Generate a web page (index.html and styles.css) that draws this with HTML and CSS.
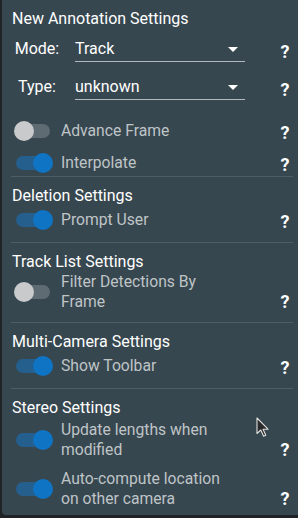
FILE: index.html
```html
<!DOCTYPE html>
<html>
<head>
<meta charset="utf-8">
<link rel="stylesheet" href="styles.css">
</head>
<body>
<div class="panel">
  <div class="section">
    <div class="title">New Annotation Settings</div>
    <div class="select-row">
      <span class="sel-label">Mode:</span>
      <div class="select">
        <span class="sel-value">Track</span>
        <svg class="sel-arrow" viewBox="0 0 24 24" width="24" height="24"><path d="M7,10L12,15L17,10H7Z" fill="#fff"/></svg>
      </div>
      <span class="help sel-help">?</span>
    </div>
    <div class="select-row">
      <span class="sel-label">Type:</span>
      <div class="select">
        <span class="sel-value">unknown</span>
        <svg class="sel-arrow" viewBox="0 0 24 24" width="24" height="24"><path d="M7,10L12,15L17,10H7Z" fill="#fff"/></svg>
      </div>
      <span class="help sel-help">?</span>
    </div>
    <div class="toggles">
      <div class="toggle-row">
        <span class="switch off"><span class="track"></span><span class="thumb"></span></span>
        <span class="label">Advance Frame</span>
        <span class="help">?</span>
      </div>
      <div class="toggle-row">
        <span class="switch on"><span class="track"></span><span class="thumb"></span></span>
        <span class="label">Interpolate</span>
        <span class="help">?</span>
      </div>
    </div>
  </div>
  <div class="divider first-divider"></div>
  <div class="section">
    <div class="title">Deletion Settings</div>
    <div class="toggle-row">
      <span class="switch on"><span class="track"></span><span class="thumb"></span></span>
      <span class="label">Prompt User</span>
      <span class="help">?</span>
    </div>
  </div>
  <div class="divider"></div>
  <div class="section">
    <div class="title">Track List Settings</div>
    <div class="toggle-row multi flush">
      <span class="switch off"><span class="track"></span><span class="thumb"></span></span>
      <span class="label">Filter Detections By Frame</span>
      <span class="help">?</span>
    </div>
  </div>
  <div class="divider"></div>
  <div class="section">
    <div class="title">Multi-Camera Settings</div>
    <div class="toggle-row">
      <span class="switch on"><span class="track"></span><span class="thumb"></span></span>
      <span class="label">Show Toolbar</span>
      <span class="help">?</span>
    </div>
  </div>
  <div class="divider"></div>
  <div class="section">
    <div class="title">Stereo Settings</div>
    <div class="toggle-row multi">
      <span class="switch on"><span class="track"></span><span class="thumb"></span></span>
      <span class="label">Update lengths when modified</span>
      <span class="help">?</span>
    </div>
    <div class="toggle-row multi spaced">
      <span class="switch on"><span class="track"></span><span class="thumb"></span></span>
      <span class="label">Auto-compute location on other camera</span>
      <span class="help">?</span>
    </div>
  </div>
  <svg class="cursor" width="14" height="21" viewBox="0 0 14 21"><path d="M1 1 L1 16.5 L4.8 13 L7.6 19.2 L9.8 18.2 L7.1 12.2 L12 12.2 Z" fill="#2a2a2a" stroke="#e0e0e0" stroke-width="1.1" stroke-linejoin="round"/></svg>
</div>
</body>
</html>
```

FILE: styles.css
```css
html, body {
  margin: 0;
  padding: 0;
  background: #1f2326;
  overflow: hidden;
}

body {
  width: 298px;
  height: 518px;
  font-family: Roboto, "Noto Sans", sans-serif;
}

.panel {
  position: relative;
  box-sizing: border-box;
  margin-left: 2px;
  width: 300px;
  height: 515px;
  background: #37474f;
  border-radius: 0 0 4px 4px;
  padding-top: 9px;
}

.section {
  display: flex;
  flex-direction: column;
}

.title {
  padding-left: 10px;
  font-size: 16px;
  line-height: 20px;
  font-weight: 400;
  color: #ffffff;
}

.select-row {
  display: flex;
  align-items: flex-start;
  height: 38px;
  padding-right: 5px;
}

.sel-label {
  width: 46px;
  margin-left: 12px;
  padding-top: 10px;
  text-align: center;
  font-size: 16px;
  line-height: 20px;
  color: #ffffff;
}

.select {
  display: flex;
  align-items: center;
  width: 170px;
  margin-left: 15px;
  padding-top: 8px;
  height: 24px;
  border-bottom: 1px solid #b3b9bc;
}

.sel-value {
  flex: 1;
  font-size: 16px;
  line-height: 20px;
  color: #ffffff;
}

.sel-arrow {
  flex: none;
}

.help {
  width: 24px;
  margin-left: auto;
  text-align: center;
  font-size: 18px;
  line-height: 20px;
  font-weight: 700;
  color: #ffffff;
}

.sel-help {
  padding-top: 13px;
}

.toggles {
  display: flex;
  flex-direction: column;
  gap: 8px;
  margin-top: 14px;
}

.toggle-row {
  display: flex;
  align-items: center;
  min-height: 24px;
  padding-right: 5px;
}

.section > .toggle-row {
  margin-top: 2px;
}

.section > .toggle-row.flush {
  margin-top: 0;
}

.section > .toggle-row.spaced {
  margin-top: 9px;
}

.toggle-row .help {
  padding-top: 4px;
}

.toggle-row.multi .help {
  align-self: flex-end;
  padding-top: 0;
}

.switch {
  position: relative;
  flex: none;
  width: 40px;
  height: 24px;
  margin-left: 12px;
}

.switch .track {
  position: absolute;
  left: 2px;
  top: 5px;
  width: 34px;
  height: 14px;
  border-radius: 7px;
}

.switch .thumb {
  position: absolute;
  top: 2px;
  width: 20px;
  height: 20px;
  border-radius: 50%;
}

.switch.off .track {
  background: #5e6b72;
}

.switch.off .thumb {
  left: 0;
  background: #c9cacb;
}

.switch.on .track {
  background: #245f8e;
}

.switch.on .thumb {
  left: 19px;
  background: #0f74c4;
}

.label {
  flex: 1;
  margin-left: 7px;
  margin-right: 40px;
  font-size: 15.7px;
  line-height: 20px;
  color: #bfc4c7;
}

.divider {
  height: 1px;
  margin: 10px 9px 9px 9px;
  background: #4f5e65;
}

.first-divider {
  margin-top: 1px;
}

.cursor {
  position: absolute;
  left: 254px;
  top: 417px;
}
```
